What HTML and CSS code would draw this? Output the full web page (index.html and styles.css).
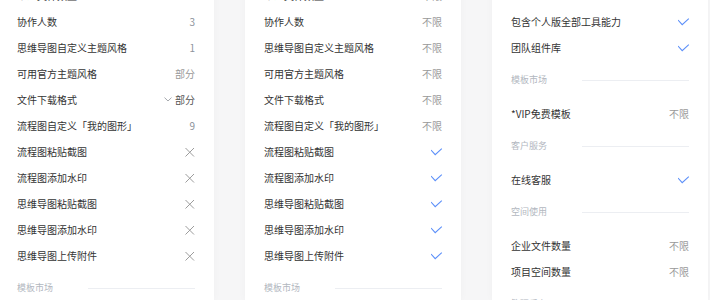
FILE: index.html
```html
<!DOCTYPE html>
<html lang="zh-CN">
<head>
<meta charset="utf-8">
<title>版本权益对比</title>
<link rel="stylesheet" href="styles.css">
</head>
<body>
<div class="board">
  <section class="card">
    <div class="row"><span class="label">个人文件数量</span><span class="val num">10</span></div>
    <div class="row"><span class="label">协作人数</span><span class="val num">3</span></div>
    <div class="row"><span class="label">思维导图自定义主题风格</span><span class="val num">1</span></div>
    <div class="row"><span class="label">可用官方主题风格</span><span class="val">部分</span></div>
    <div class="row"><span class="label">文件下载格式</span><span class="val dark"><svg class="chev" width="8" height="5" viewBox="0 0 8 5"><polyline points="0.5,0.6 4,4 7.5,0.6" fill="none" stroke="#a6a9ae" stroke-width="1"/></svg>部分</span></div>
    <div class="row"><span class="label">流程图自定义「我的图形」</span><span class="val num">9</span></div>
    <div class="row"><span class="label">流程图粘贴截图</span><span class="val"><svg class="icon" width="12" height="12" viewBox="0 0 12 12"><path d="M1.5 2L10 10.5M10 2L1.5 10.5" stroke="#9c9c9c" stroke-width="1" fill="none"/></svg></span></div>
    <div class="row"><span class="label">流程图添加水印</span><span class="val"><svg class="icon" width="12" height="12" viewBox="0 0 12 12"><path d="M1.5 2L10 10.5M10 2L1.5 10.5" stroke="#9c9c9c" stroke-width="1" fill="none"/></svg></span></div>
    <div class="row"><span class="label">思维导图粘贴截图</span><span class="val"><svg class="icon" width="12" height="12" viewBox="0 0 12 12"><path d="M1.5 2L10 10.5M10 2L1.5 10.5" stroke="#9c9c9c" stroke-width="1" fill="none"/></svg></span></div>
    <div class="row"><span class="label">思维导图添加水印</span><span class="val"><svg class="icon" width="12" height="12" viewBox="0 0 12 12"><path d="M1.5 2L10 10.5M10 2L1.5 10.5" stroke="#9c9c9c" stroke-width="1" fill="none"/></svg></span></div>
    <div class="row"><span class="label">思维导图上传附件</span><span class="val"><svg class="icon" width="12" height="12" viewBox="0 0 12 12"><path d="M1.5 2L10 10.5M10 2L1.5 10.5" stroke="#9c9c9c" stroke-width="1" fill="none"/></svg></span></div>
    <div class="sect"><span class="sect-title">模板市场</span><span class="sect-line"></span></div>
  </section>

  <section class="card">
    <div class="row"><span class="label">个人文件数量</span><span class="val">不限</span></div>
    <div class="row"><span class="label">协作人数</span><span class="val">不限</span></div>
    <div class="row"><span class="label">思维导图自定义主题风格</span><span class="val">不限</span></div>
    <div class="row"><span class="label">可用官方主题风格</span><span class="val">不限</span></div>
    <div class="row"><span class="label">文件下载格式</span><span class="val">不限</span></div>
    <div class="row"><span class="label">流程图自定义「我的图形」</span><span class="val">不限</span></div>
    <div class="row"><span class="label">流程图粘贴截图</span><span class="val"><svg class="icon" width="12" height="12" viewBox="0 0 12 12"><path d="M0 4L4.2 8.6L10.8 2.6" stroke="#5b8ff9" stroke-width="1.1" fill="none"/></svg></span></div>
    <div class="row"><span class="label">流程图添加水印</span><span class="val"><svg class="icon" width="12" height="12" viewBox="0 0 12 12"><path d="M0 4L4.2 8.6L10.8 2.6" stroke="#5b8ff9" stroke-width="1.1" fill="none"/></svg></span></div>
    <div class="row"><span class="label">思维导图粘贴截图</span><span class="val"><svg class="icon" width="12" height="12" viewBox="0 0 12 12"><path d="M0 4L4.2 8.6L10.8 2.6" stroke="#5b8ff9" stroke-width="1.1" fill="none"/></svg></span></div>
    <div class="row"><span class="label">思维导图添加水印</span><span class="val"><svg class="icon" width="12" height="12" viewBox="0 0 12 12"><path d="M0 4L4.2 8.6L10.8 2.6" stroke="#5b8ff9" stroke-width="1.1" fill="none"/></svg></span></div>
    <div class="row"><span class="label">思维导图上传附件</span><span class="val"><svg class="icon" width="12" height="12" viewBox="0 0 12 12"><path d="M0 4L4.2 8.6L10.8 2.6" stroke="#5b8ff9" stroke-width="1.1" fill="none"/></svg></span></div>
    <div class="sect"><span class="sect-title">模板市场</span><span class="sect-line"></span></div>
  </section>

  <section class="card">
    <div class="spacer"></div>
    <div class="row"><span class="label">包含个人版全部工具能力</span><span class="val"><svg class="icon" width="12" height="12" viewBox="0 0 12 12"><path d="M0 4L4.2 8.6L10.8 2.6" stroke="#5b8ff9" stroke-width="1.1" fill="none"/></svg></span></div>
    <div class="row"><span class="label">团队组件库</span><span class="val"><svg class="icon" width="12" height="12" viewBox="0 0 12 12"><path d="M0 4L4.2 8.6L10.8 2.6" stroke="#5b8ff9" stroke-width="1.1" fill="none"/></svg></span></div>
    <div class="sect"><span class="sect-title">模板市场</span><span class="sect-line"></span></div>
    <div class="row"><span class="label">*VIP免费模板</span><span class="val">不限</span></div>
    <div class="sect"><span class="sect-title">客户服务</span><span class="sect-line"></span></div>
    <div class="row"><span class="label">在线客服</span><span class="val"><svg class="icon" width="12" height="12" viewBox="0 0 12 12"><path d="M0 4L4.2 8.6L10.8 2.6" stroke="#5b8ff9" stroke-width="1.1" fill="none"/></svg></span></div>
    <div class="sect"><span class="sect-title">空间使用</span><span class="sect-line"></span></div>
    <div class="row"><span class="label">企业文件数量</span><span class="val">不限</span></div>
    <div class="row"><span class="label">项目空间数量</span><span class="val">不限</span></div>
    <div class="sect"><span class="sect-title">管理后台</span><span class="sect-line"></span></div>
  </section>
</div>
</body>
</html>
```
FILE: styles.css
```css
html, body {
  margin: 0;
  padding: 0;
  width: 710px;
  height: 300px;
  overflow: hidden;
  background: #f6f6f7;
  font-family: "Noto Sans CJK SC", "Noto Sans", sans-serif;
}

.board {
  display: flex;
  gap: 31px;
  margin: -17px 0 0 -2px;
  height: 317px;
  overflow: hidden;
}

.card {
  flex: 0 0 216px;
  box-sizing: border-box;
  padding: 0 19px;
  background: #ffffff;
  box-shadow: 0 0 8px rgba(0, 0, 0, 0.03);
  height: 317px;
  overflow: hidden;
}

.spacer {
  height: 26px;
}

.row {
  height: 26px;
  display: flex;
  align-items: center;
  justify-content: space-between;
  font-size: 10px;
  line-height: 14px;
}

.label {
  color: #333333;
}

.val {
  color: #999999;
  display: flex;
  align-items: center;
}

.val.num {
  color: #8e939b;
}

.val.dark {
  color: #555555;
}

.chev {
  margin-right: 3px;
  margin-top: -2px;
}

.icon {
  display: block;
  margin-right: -1px;
}

.sect {
  height: 40px;
  box-sizing: border-box;
  padding-top: 12px;
  display: flex;
  align-items: flex-start;
}

.sect-title {
  flex: 0 0 71px;
  font-size: 9px;
  line-height: 14px;
  color: #b2b7c0;
}

.sect-line {
  flex: 1;
  height: 1px;
  margin-top: 7px;
  background: #eceef2;
}
```
